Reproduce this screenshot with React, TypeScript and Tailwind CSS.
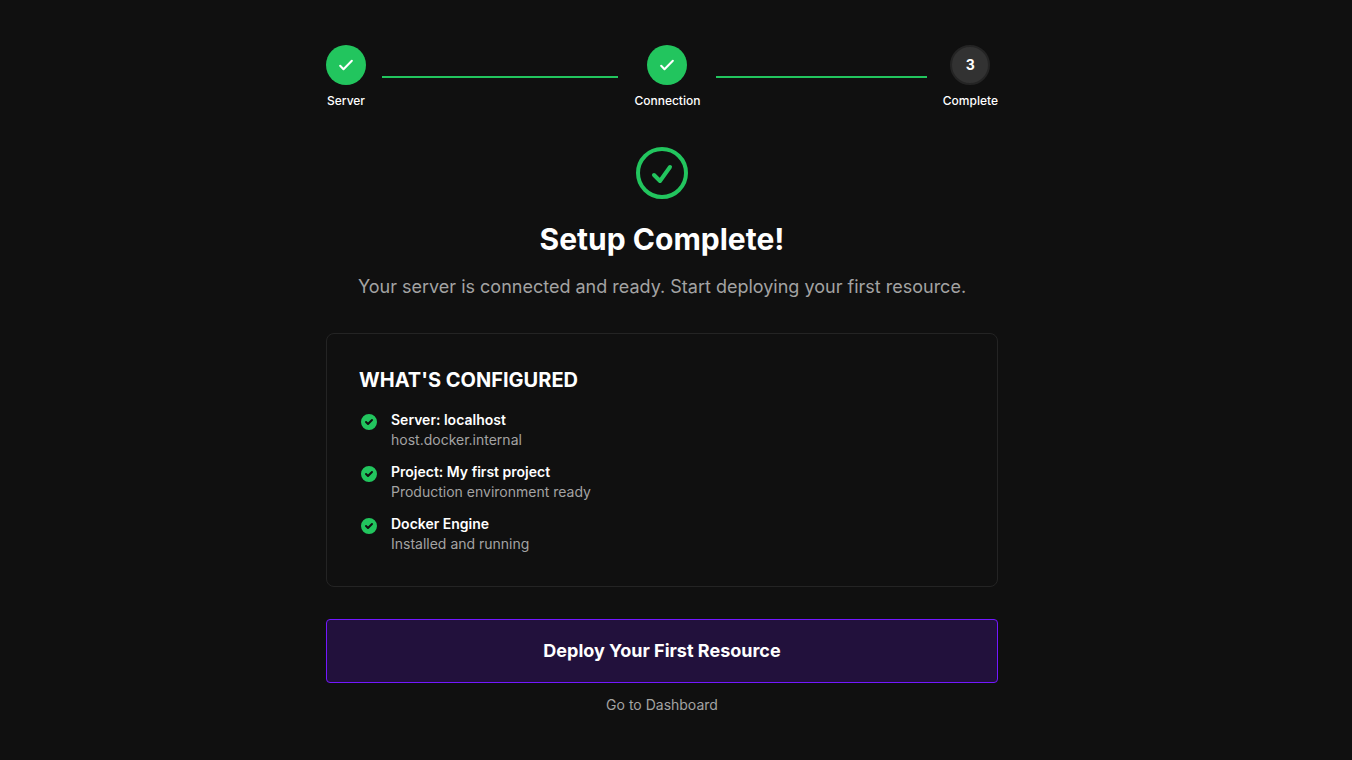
import { Fragment } from 'react';

const steps = [
  { label: 'Server', done: true },
  { label: 'Connection', done: true },
  { label: 'Complete', done: false }
];

const configured = [
  { title: 'Server: localhost', detail: 'host.docker.internal' },
  { title: 'Project: My first project', detail: 'Production environment ready' },
  { title: 'Docker Engine', detail: 'Installed and running' }
];

function StepMarker({
  label,
  done,
  number
}: {
  label: string;
  done: boolean;
  number: number;
}) {
  return (
    <div className="flex flex-col items-center">
      {done ? (
        <div className="flex size-10 items-center justify-center rounded-full bg-[#22c55e] text-white">
          <svg
            className="size-5"
            viewBox="0 0 24 24"
            fill="none"
            stroke="currentColor"
            strokeWidth="2.5"
            aria-hidden="true"
          >
            <path strokeLinecap="round" strokeLinejoin="round" d="M5 13l4 4L19 7" />
          </svg>
        </div>
      ) : (
        <div className="flex size-10 items-center justify-center rounded-full border-2 border-[#242424] bg-[#323232] text-sm font-bold text-white">
          {number}
        </div>
      )}
      <span className="mt-2 text-xs font-medium text-white">{label}</span>
    </div>
  );
}

function Stepper() {
  return (
    <div className="flex items-center">
      {steps.map((step, index) => (
        <Fragment key={step.label}>
          {index < steps.length - 1 ? (
            <div className="flex flex-1 items-center">
              <StepMarker label={step.label} done={step.done} number={index + 1} />
              <div className="mx-4 h-0.5 flex-1 bg-[#22c55e]"></div>
            </div>
          ) : (
            <StepMarker label={step.label} done={step.done} number={index + 1} />
          )}
        </Fragment>
      ))}
    </div>
  );
}

function Summary() {
  return (
    <section className="rounded-lg border border-[#242424] p-8">
      <h2 className="mb-4 text-xl font-bold text-white uppercase">
        What's Configured
      </h2>
      <ul className="space-y-3">
        {configured.map((item) => (
          <li key={item.title} className="flex items-start gap-3">
            <svg
              className="mt-0.5 size-5 shrink-0 text-[#22c55e]"
              viewBox="0 0 20 20"
              fill="currentColor"
              aria-hidden="true"
            >
              <path
                fillRule="evenodd"
                clipRule="evenodd"
                d="M10 18a8 8 0 100-16 8 8 0 000 16zm3.707-9.293a1 1 0 00-1.414-1.414L9 10.586 7.707 9.293a1 1 0 00-1.414 1.414l2 2a1 1 0 001.414 0l4-4z"
              />
            </svg>
            <div className="text-sm">
              <p className="font-semibold text-white">{item.title}</p>
              <p className="text-[#a3a3a3]">{item.detail}</p>
            </div>
          </li>
        ))}
      </ul>
    </section>
  );
}

export default function App() {
  return (
    <main className="flex min-h-screen flex-col items-center justify-center bg-[#101010] pr-7 font-['Inter',sans-serif]">
      <div className="w-full max-w-2xl space-y-8">
        <Stepper />

        <div className="flex flex-col items-center text-center">
          <svg
            className="size-16 text-[#22c55e]"
            viewBox="0 0 24 24"
            fill="none"
            stroke="currentColor"
            strokeWidth="1.5"
            aria-hidden="true"
          >
            <path
              strokeLinecap="round"
              strokeLinejoin="round"
              d="M9 12.75L11.25 15 15 9.75M21 12a9 9 0 11-18 0 9 9 0 0118 0z"
            />
          </svg>
          <h1 className="mt-4 text-3xl font-bold text-white">Setup Complete!</h1>
          <p className="mt-4 text-lg text-[#a3a3a3]">
            Your server is connected and ready. Start deploying your first resource.
          </p>
        </div>

        <Summary />

        <div className="flex flex-col items-center gap-3">
          <button
            type="button"
            className="h-16 w-full rounded-sm border border-[#7317ff] bg-[#22113c] text-lg font-bold text-white"
          >
            Deploy Your First Resource
          </button>
          <a href="#dashboard" className="text-sm text-[#a3a3a3]">
            Go to Dashboard
          </a>
        </div>
      </div>
    </main>
  );
}
